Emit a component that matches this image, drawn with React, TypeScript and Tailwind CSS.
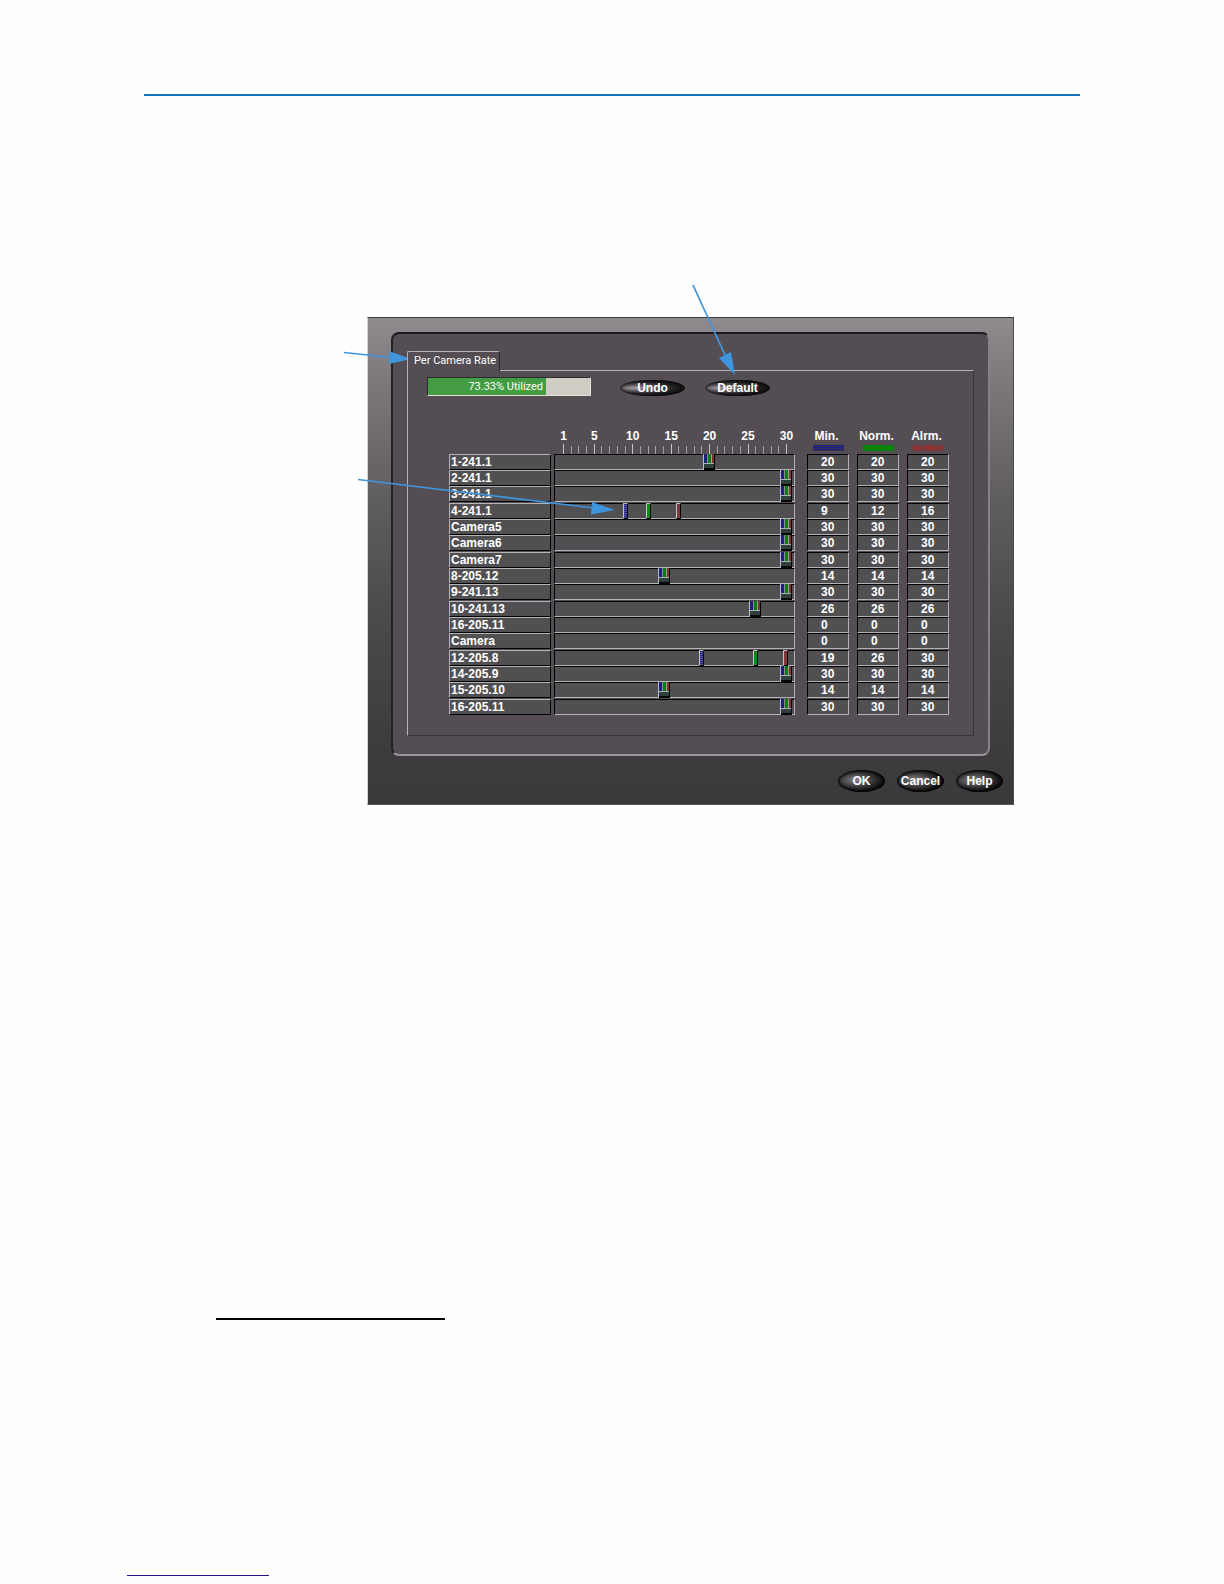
type Camera = {
    name: string;
    rates: [number, number, number];
};

const cameras: Camera[] = [
    { name: "1-241.1", rates: [20, 20, 20] },
    { name: "2-241.1", rates: [30, 30, 30] },
    { name: "3-241.1", rates: [30, 30, 30] },
    { name: "4-241.1", rates: [9, 12, 16] },
    { name: "Camera5", rates: [30, 30, 30] },
    { name: "Camera6", rates: [30, 30, 30] },
    { name: "Camera7", rates: [30, 30, 30] },
    { name: "8-205.12", rates: [14, 14, 14] },
    { name: "9-241.13", rates: [30, 30, 30] },
    { name: "10-241.13", rates: [26, 26, 26] },
    { name: "16-205.11", rates: [0, 0, 0] },
    { name: "Camera", rates: [0, 0, 0] },
    { name: "12-205.8", rates: [19, 26, 30] },
    { name: "14-205.9", rates: [30, 30, 30] },
    { name: "15-205.10", rates: [14, 14, 14] },
    { name: "16-205.11", rates: [30, 30, 30] },
];

const levels = [
    {
        label: "Min.",
        bar: "bg-[repeating-linear-gradient(#1c1c8c_0_1px,#34344c_1px_2px)]",
        thumb: "[&::-webkit-slider-thumb]:bg-[repeating-linear-gradient(#23238a_0_1px,#5a5aa8_1px_2px)]",
    },
    {
        label: "Norm.",
        bar: "bg-[#078407]",
        thumb: "[&::-webkit-slider-thumb]:bg-[#118a16]",
    },
    {
        label: "Alrm.",
        bar: "bg-[repeating-linear-gradient(45deg,#9e2e30_0_1px,#6a3c40_1px_2px)]",
        thumb: "[&::-webkit-slider-thumb]:bg-[repeating-linear-gradient(45deg,#93383a_0_1px,#6f3538_1px_2px)]",
    },
];

const marks = Array.from({ length: 30 }, (_, i) => i + 1);

const Scale = () => {
    return (
        <div className="ml-[6px] mr-[5px] flex justify-between">
            {marks.map((mark) => (
                <div key={mark} className="flex w-[7px] flex-col items-center">
                    <span className="flex h-[16px] w-0 justify-center leading-[16px]">
                        {mark === 1 || mark % 5 === 0 ? mark : ""}
                    </span>
                    <span className={mark === 1 || mark % 5 === 0 ? "h-[10px] w-px bg-[#c4c2c4]" : "mt-[2px] h-[8px] w-px bg-[#a5a2a5]"} />
                </div>
            ))}
        </div>
    )
}

const RateSlider = ({ camera }: { camera: Camera }) => {
    const [min, norm, alrm] = camera.rates;
    const linked = min === norm && norm === alrm;
    return (
        <div className="relative mr-[12px] h-[16px] border border-t-black border-l-black border-b-[#b4b2b4] border-r-[#b4b2b4] bg-[#505053]">
            {min > 0 && linked && (
                <div className="absolute -top-px left-[3px] right-[2px] flex">
                    <input
                        type="range"
                        min={1}
                        max={30}
                        defaultValue={norm}
                        aria-label={`${camera.name} rate`}
                        className="h-[16px] w-full appearance-none bg-transparent [&::-webkit-slider-thumb]:h-[16px] [&::-webkit-slider-thumb]:w-[12px] [&::-webkit-slider-thumb]:appearance-none [&::-webkit-slider-thumb]:bg-[linear-gradient(90deg,#b9b9cc_0_1px,transparent_1px_11px,#000_11px),linear-gradient(transparent_0_9px,#a9b0ad_9px_10px,#2f403c_10px_14px,#050505_14px),linear-gradient(90deg,#b9b9cc_0_1px,#1e1e7c_1px_4px,#7f8f8a_4px_5px,#0b7c14_5px_8px,#a09a98_8px_9px,#7e3434_9px_11px,#0a0505_11px)]"
                    />
                </div>
            )}
            {min > 0 && !linked && levels.map((level, i) => (
                <div key={level.label} className="pointer-events-none absolute -top-px left-[7px] right-[6px] flex">
                    <input
                        type="range"
                        min={1}
                        max={30}
                        defaultValue={camera.rates[i]}
                        aria-label={`${camera.name} ${level.label}`}
                        className={`h-[16px] w-full appearance-none bg-transparent [&::-webkit-slider-thumb]:pointer-events-auto [&::-webkit-slider-thumb]:h-[16px] [&::-webkit-slider-thumb]:w-[5px] [&::-webkit-slider-thumb]:appearance-none [&::-webkit-slider-thumb]:border [&::-webkit-slider-thumb]:border-t-[#b8b8b8] [&::-webkit-slider-thumb]:border-l-[#c4c4c4] [&::-webkit-slider-thumb]:border-b-black [&::-webkit-slider-thumb]:border-r-black ${level.thumb}`}
                    />
                </div>
            ))}
        </div>
    )
}

const RateTable = () => {
    return (
        <table className="w-full table-fixed border-collapse text-[12px] font-bold text-white">
            <colgroup>
                <col className="w-[105px]" />
                <col />
                <col className="w-[50px]" />
                <col className="w-[50px]" />
                <col className="w-[42px]" />
            </colgroup>
            <thead>
                <tr className="align-top">
                    <td className="p-0" />
                    <td className="p-0">
                        <div className="mr-[12px]">
                            <Scale />
                        </div>
                    </td>
                    {levels.map((level) => (
                        <th key={level.label} scope="col" className="p-0">
                            <div className="flex w-[42px] flex-col items-center">
                                <span className="h-[17px] pr-[3px] leading-[16px]">{level.label}</span>
                                <span className={`h-[6px] w-[31px] ${level.bar}`} />
                            </div>
                        </th>
                    ))}
                </tr>
            </thead>
            <tbody>
                {cameras.map((camera, row) => (
                    <tr key={row} className="h-[16px] align-top nth-[3n]:h-[17px]">
                        <th scope="row" className="p-0 text-left">
                            <div className="mr-[3px] h-[16px] border border-t-[#b4b2b4] border-l-[#b4b2b4] border-b-black border-r-black bg-[#505053] pl-px leading-[15px]">
                                {camera.name}
                            </div>
                        </th>
                        <td className="p-0">
                            <RateSlider camera={camera} />
                        </td>
                        {camera.rates.map((rate, i) => (
                            <td key={i} className="p-0">
                                <div className="h-[16px] w-[42px] border border-t-black border-l-black border-b-[#b4b2b4] border-r-[#b4b2b4] bg-[#505053] pl-[13px] leading-[15px]">
                                    {rate}
                                </div>
                            </td>
                        ))}
                    </tr>
                ))}
            </tbody>
        </table>
    )
}

const Arrows = () => {
    return (
        <svg className="pointer-events-none absolute -left-px -top-px overflow-visible" width="1" height="1" aria-hidden="true">
            <g stroke="#3f95dd" strokeWidth="1.75" fill="none">
                <path d="M-23 35.500L24 40.500" />
                <path d="M326 -32L358 38" />
                <path d="M-9 162.500L227 191" />
            </g>
            <g fill="#3f95dd">
                <path d="M22 34L44 42L22 47Z" />
                <path d="M352 41L364 35L368 58Z" />
                <path d="M225 185L248 193L224 197.500Z" />
            </g>
        </svg>
    )
}

const toolButton = "flex h-[16px] w-[65px] items-center justify-center rounded-[50%] bg-[radial-gradient(ellipse_at_24%_50%,#a6a2a6_0%,#6a666a_20%,#2b292b_50%,#000_80%)] text-[12px] leading-[16px] font-bold text-white shadow-[inset_0_0_3px_1px_#111]";
const footerButton = "flex h-[22px] w-[47px] items-center justify-center rounded-[50%] bg-[radial-gradient(ellipse_at_38%_45%,#8a868a_0%,#555255_25%,#121112_65%,#000_100%)] text-[12px] font-bold text-white shadow-[inset_0_0_3px_1px_#000]";

const CameraRateDialog = () => {
    return (
        <div className="relative ml-auto mr-[66px] w-full max-w-[647px] border border-t-[#3a383a] border-l-[#d0d0d0] border-b-[#555355] border-r-[#4a484a] bg-[linear-gradient(#8f8b8f_0%,#7d797d_12%,#5f5c5f_38%,#4a474a_65%,#3d3b3d_90%,#3b393b_100%)] px-[23px] pt-[14px] pb-[12px]">
            <div className="rounded-[8px] border-2 border-t-[#1d1a1d] border-l-[#242124] border-b-[#989498] border-r-[#858185] bg-[#544e54] px-[14px] pt-[17px] pb-[18px]">
                <div role="tablist" className="flex">
                    <button type="button" role="tab" aria-selected="true" className="relative z-10 -mb-px h-[20px] w-[93px] rounded-t-[2px] border border-b-0 border-t-[#b4b2b4] border-l-[#b4b2b4] border-r-[#2b282b] bg-[#544e54] pl-[6px] text-left text-[11px] whitespace-nowrap text-white font-['Roboto','Liberation_Sans',sans-serif]">
                        Per Camera Rate
                    </button>
                </div>
                <div role="tabpanel" className="border border-t-[#b4b2b4] border-l-[#b4b2b4] border-b-[#383438] border-r-[#383438] pt-[6px] pr-[24px] pb-[20px] pl-[19px]">
                    <div className="flex items-end">
                        <div className="flex h-[19px] w-[164px] border border-t-[#2c2a2c] border-l-[#2c2a2c] border-b-[#e4e0dc] border-r-[#e4e0dc] bg-[#d0cbc3]">
                            <div className="w-[118px] bg-[#439c43] pr-[3px] text-right text-[11px] leading-[18px] whitespace-nowrap text-white font-['Roboto','Liberation_Sans',sans-serif]">
                                73.33% Utilized
                            </div>
                        </div>
                        <div className="ml-[29px] flex gap-[20px]">
                            <button type="button" className={toolButton}>Undo</button>
                            <button type="button" className={toolButton}>Default</button>
                        </div>
                    </div>
                    <div className="pt-[32px] pl-[22px]">
                        <RateTable />
                    </div>
                </div>
            </div>
            <div className="mt-[14px] -mr-[13px] flex justify-end gap-[12px]">
                <button type="button" className={footerButton}>OK</button>
                <button type="button" className={footerButton}>Cancel</button>
                <button type="button" className={footerButton}>Help</button>
            </div>
            <Arrows />
        </div>
    )
}

const App = () => {
    return (
        <div className="flex min-h-screen flex-col bg-[#fefefe] font-['Liberation_Sans',Arial,sans-serif]">
            <main className="px-36 pt-[94px]">
                <hr className="border-t-2 border-[#1273bf]" />
                <div className="pt-[221px]">
                    <CameraRateDialog />
                </div>
            </main>
            <footer className="pt-[513px] pb-[8px]">
                <hr className="ml-[216px] w-[229px] border-t-2 border-black" />
                <hr className="mt-[255px] ml-[127px] w-[142px] border-[#1e1690]" />
            </footer>
        </div>
    )
}

export default App
